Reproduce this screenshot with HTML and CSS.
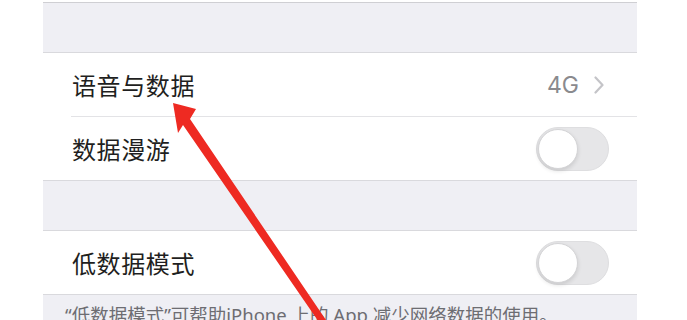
FILE: index.html
```html
<!DOCTYPE html>
<html lang="zh-CN">
<head>
    <meta charset="UTF-8">
    <title>蜂窝网络</title>
    <link rel="stylesheet" href="styles.css">
</head>
<body>
    <div class="screen">
        <!-- 顶部分组间隔 -->
        <div class="spacer"></div>

        <div class="group">
            <div class="cell">
                <div class="cell-body">
                    <span class="label">语音与数据</span>
                    <span class="detail">4G</span>
                    <svg class="chevron" width="10" height="18" viewBox="0 0 10 18">
                        <polyline points="1.5,1.5 8.5,9 1.5,16.5" fill="none" stroke="#c4c4c8" stroke-width="2.2" stroke-linecap="round" stroke-linejoin="round"/>
                    </svg>
                </div>
            </div>
            <div class="cell">
                <div class="cell-body">
                    <span class="label">数据漫游</span>
                    <div class="switch"><div class="knob"></div></div>
                </div>
            </div>
        </div>

        <div class="spacer"></div>

        <div class="group">
            <div class="cell">
                <div class="cell-body">
                    <span class="label">低数据模式</span>
                    <div class="switch"><div class="knob"></div></div>
                </div>
            </div>
        </div>

        <!-- 分组说明 -->
        <div class="footer">“低数据模式”可帮助iPhone 上的 App 减少网络数据的使用。</div>
    </div>

    <!-- 标注箭头 -->
    <svg class="arrow" width="687" height="320" viewBox="0 0 687 320">
        <polygon points="173,103 196,109 190,119 330,326 323,328 183,125 178,133" fill="#ee2a22"/>
    </svg>
</body>
</html>
```

FILE: styles.css
```css
* {
    margin: 0;
    padding: 0;
    box-sizing: border-box;
}

body {
    font-family: "Noto Sans CJK SC", "Noto Sans", sans-serif;
    background-color: #fff;
    color: #1c1c1e;
    width: 687px;
    height: 320px;
    overflow: hidden;
    position: relative;
}

/* 设置页面 */
.screen {
    margin-top: 2px;
    margin-left: 43px;
    width: 594px;
    height: 318px;
    background: #efeff4;
    border-top: 1px solid #cfcfd3;
    overflow: hidden;
}

.spacer {
    height: 50px;
    border-bottom: 1px solid #d9d9dd;
}

.group {
    background: #fff;
    border-bottom: 1px solid #d9d9dd;
}

.cell {
    padding-left: 28px;
}

.cell-body {
    height: 64px;
    display: flex;
    align-items: center;
    padding-left: 1px;
    padding-right: 28px;
    border-bottom: 1px solid #e3e3e6;
}

.cell:last-child .cell-body {
    height: 63px;
    border-bottom: none;
}

.label {
    flex: 1;
    font-size: 24px;
    letter-spacing: 0.6px;
    color: #1f1f21;
}

.detail {
    font-family: Inter, "Noto Sans", sans-serif;
    font-size: 23px;
    color: #8a8a8e;
    margin-right: 15px;
}

.chevron {
    margin-right: 5px;
}

/* 开关 */
.switch {
    width: 73px;
    height: 44px;
    border-radius: 22px;
    background: #e6e6e8;
    border: 1px solid #dedee0;
    position: relative;
}

.knob {
    position: absolute;
    top: 1px;
    left: 1px;
    width: 40px;
    height: 40px;
    border-radius: 50%;
    background: #fff;
    border: 1px solid #d4d4d6;
    box-shadow: 0 2px 4px rgba(0, 0, 0, 0.12);
}

.footer {
    padding: 6px 22px 0;
    font-family: "Noto Sans", "Noto Sans CJK SC", sans-serif;
    font-size: 18.5px;
    color: #6d6d72;
    white-space: nowrap;
}

/* 红色箭头 */
.arrow {
    position: absolute;
    top: 0;
    left: 0;
}
```
